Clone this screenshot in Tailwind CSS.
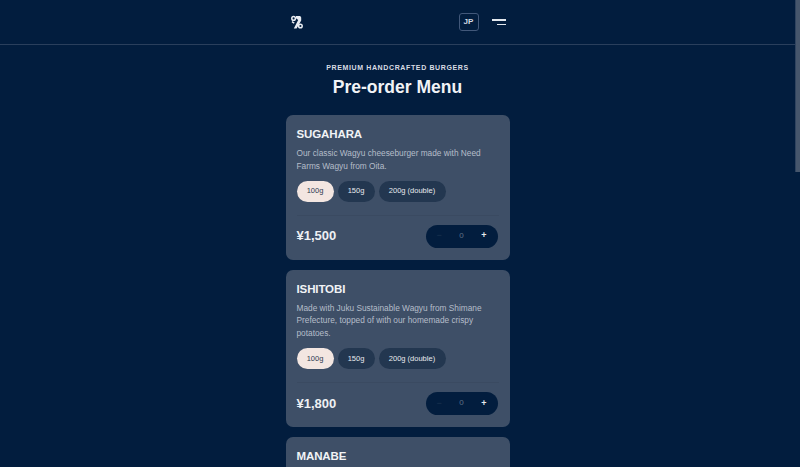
<!DOCTYPE html>
<html lang="en">

<head>
    <meta charset="UTF-8">
    <meta name="viewport" content="width=device-width, initial-scale=1.0">
    <title>Pre-order Menu</title>
    <script src="https://cdn.jsdelivr.net/npm/@tailwindcss/browser@4"></script>
</head>

<body class="bg-[#021d3e] font-['Liberation_Sans',sans-serif] text-white overflow-hidden">
    <div class="flex h-[467px] overflow-hidden">
        <div class="flex-1 min-w-0 h-[467px] overflow-hidden">
            <!-- header -->
            <header class="h-[45px] border-b border-[#2a3f5c]">
                <div class="w-[224px] h-full mx-auto flex items-center justify-between pl-[5px] pr-[4px]">
                    <svg width="12" height="14" viewBox="0 0 12 14" fill="none">
                        <circle cx="2.6" cy="3.4" r="1.8" stroke="#e8ecf2" stroke-width="1.5" />
                        <path d="M5 1h4.2l1 1.6v2.8L5.6 13.4H2.8l4.4-8.4-2.2-1.8z" fill="#e8ecf2" />
                        <path d="M1 6.6l2.2 1.6" stroke="#e8ecf2" stroke-width="1.5" />
                        <circle cx="9.4" cy="11" r="1.8" stroke="#e8ecf2" stroke-width="1.5" />
                    </svg>
                    <div class="flex items-center gap-[13px]">
                        <div class="w-[20px] h-[18px] rounded-[3px] border border-[#42587a] flex items-center justify-center text-[8px] font-bold text-[#d5dbe4]">JP</div>
                        <div class="flex flex-col items-end gap-[3px] w-[14px]">
                            <div class="w-[14px] h-[1.5px] bg-[#e3e8ee]"></div>
                            <div class="w-[9px] h-[1.5px] bg-[#e3e8ee]"></div>
                        </div>
                    </div>
                </div>
            </header>

            <main class="w-[224px] mx-auto">
                <div class="text-center pt-[18px] pb-[17px]">
                    <p class="text-[7px] leading-[9px] font-bold tracking-[0.09em] text-[#d8dce3]">PREMIUM HANDCRAFTED BURGERS</p>
                    <h1 class="mt-[4px] text-[17.5px] leading-[22px] font-bold text-[#f1f3f6]">Pre-order Menu</h1>
                </div>

                <div class="flex flex-col gap-[10px]">
                    <!-- SUGAHARA -->
                    <article class="bg-[#3e4f67] rounded-[7px] pt-[12px] px-[11px] pb-[12px]">
                        <h2 class="text-[11.5px] leading-[14px] font-bold tracking-[-0.01em] text-[#f1f3f6]">SUGAHARA</h2>
                        <p class="mt-[6px] text-[8.3px] leading-[12.75px] text-[#b5bdc9]">Our classic Wagyu cheeseburger made with Need Farms Wagyu from Oita.</p>
                        <div class="mt-[8px] flex gap-[4px] text-[7.5px]">
                            <span class="w-[37px] h-[21px] rounded-full bg-[#f3e6e1] text-[#2c3a50] flex items-center justify-center">100g</span>
                            <span class="w-[37px] h-[21px] rounded-full bg-[#233750] text-[#e8ebef] flex items-center justify-center">150g</span>
                            <span class="w-[67px] h-[21px] rounded-full bg-[#233750] text-[#e8ebef] flex items-center justify-center">200g (double)</span>
                        </div>
                        <div class="mt-[13px] border-t border-[#3a4a61] pt-[9px] flex items-center justify-between pr-[1px]">
                            <span class="text-[13px] font-bold text-[#eef0f3]">¥1,500</span>
                            <div class="w-[72px] h-[23px] rounded-full bg-[#021d3e] flex items-center justify-between px-[11px] text-[9px]">
                                <span class="text-[#1e3552]">−</span>
                                <span class="text-[8px] text-[#5f7087]">0</span>
                                <span class="text-[#e7eaee] font-bold">+</span>
                            </div>
                        </div>
                    </article>

                    <!-- ISHITOBI -->
                    <article class="bg-[#3e4f67] rounded-[7px] pt-[12px] px-[11px] pb-[12px]">
                        <h2 class="text-[11.5px] leading-[14px] font-bold tracking-[-0.01em] text-[#f1f3f6]">ISHITOBI</h2>
                        <p class="mt-[6px] text-[8.3px] leading-[12.75px] text-[#b5bdc9]">Made with Juku Sustainable Wagyu from Shimane Prefecture, topped of with our homemade crispy potatoes.</p>
                        <div class="mt-[8px] flex gap-[4px] text-[7.5px]">
                            <span class="w-[37px] h-[21px] rounded-full bg-[#f3e6e1] text-[#2c3a50] flex items-center justify-center">100g</span>
                            <span class="w-[37px] h-[21px] rounded-full bg-[#233750] text-[#e8ebef] flex items-center justify-center">150g</span>
                            <span class="w-[67px] h-[21px] rounded-full bg-[#233750] text-[#e8ebef] flex items-center justify-center">200g (double)</span>
                        </div>
                        <div class="mt-[13px] border-t border-[#3a4a61] pt-[9px] flex items-center justify-between pr-[1px]">
                            <span class="text-[13px] font-bold text-[#eef0f3]">¥1,800</span>
                            <div class="w-[72px] h-[23px] rounded-full bg-[#021d3e] flex items-center justify-between px-[11px] text-[9px]">
                                <span class="text-[#1e3552]">−</span>
                                <span class="text-[8px] text-[#5f7087]">0</span>
                                <span class="text-[#e7eaee] font-bold">+</span>
                            </div>
                        </div>
                    </article>

                    <!-- MANABE -->
                    <article class="bg-[#3e4f67] rounded-[7px] pt-[12px] px-[11px] pb-[11px] h-[60px]">
                        <h2 class="text-[11.5px] leading-[14px] font-bold tracking-[-0.01em] text-[#f1f3f6]">MANABE</h2>
                    </article>
                </div>
            </main>
        </div>

        <!-- scrollbar -->
        <div class="w-[5px] shrink-0">
            <div class="h-[172px] bg-[#46566c] border-l border-[#2f435f]"></div>
        </div>
    </div>
</body>

</html>
